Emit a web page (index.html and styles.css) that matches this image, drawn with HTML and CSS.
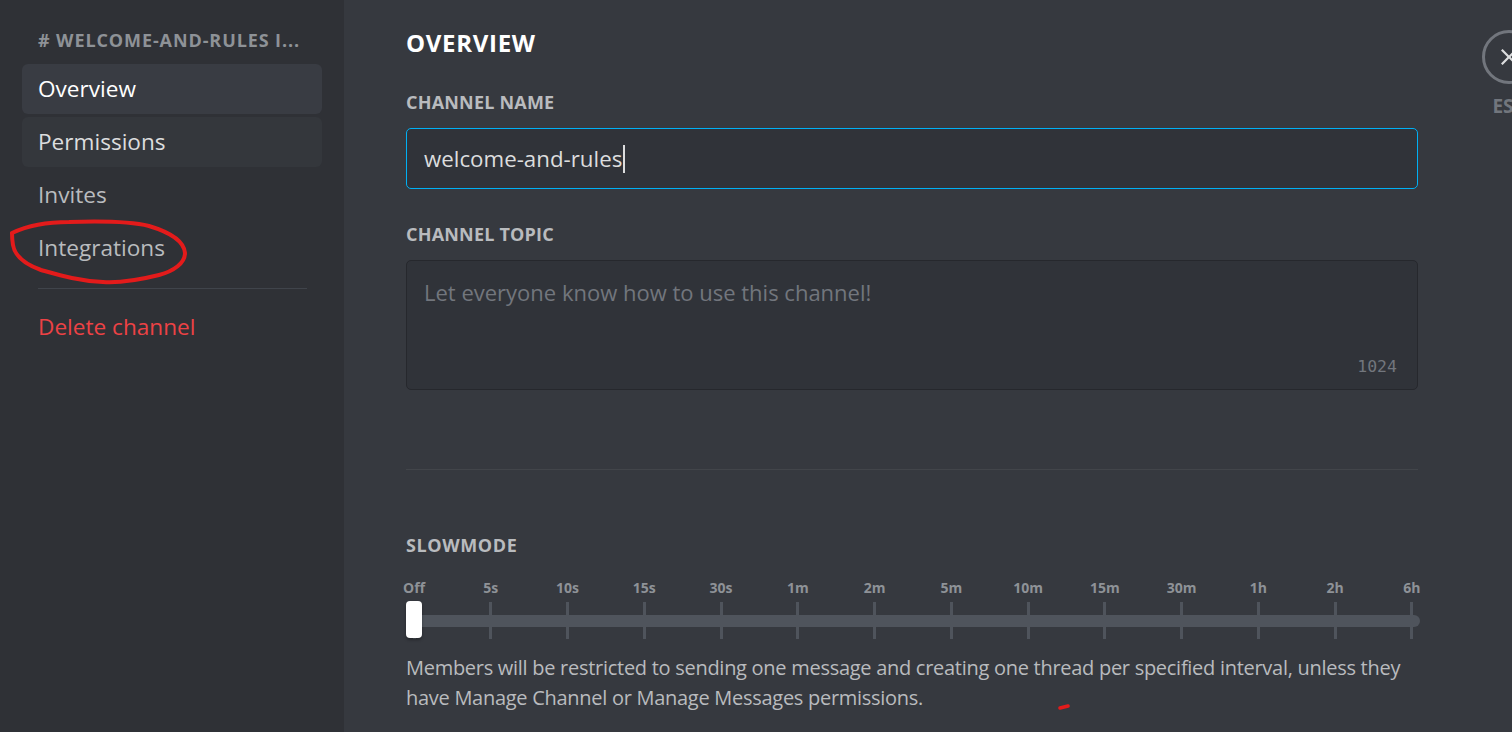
FILE: index.html
```html
<!DOCTYPE html>
<html lang="en">
<head>
<meta charset="utf-8">
<title>Channel Settings</title>
<link rel="stylesheet" href="styles.css">
</head>
<body>
<div class="app">
  <nav class="sidebar">
    <div class="side-inner">
      <div class="side-header"># WELCOME-AND-RULES I...</div>
      <div class="side-item selected">Overview</div>
      <div class="side-item hovered">Permissions</div>
      <div class="side-item">Invites</div>
      <div class="side-item">Integrations</div>
      <div class="side-sep"></div>
      <div class="side-item danger">Delete channel</div>
    </div>
    <svg class="scribble" width="200" height="80" viewBox="0 0 200 80" aria-hidden="true">
      <path d="M3 18 C 20 10, 40 7, 60 7 C 90 6, 120 6, 140 11 C 160 17, 175 26, 176 38 C 176 48, 165 56, 150 60 C 130 65, 110 68, 94 67 C 70 66, 50 60, 32 55 C 18 50, 6 42, 4 30 C 3 24, 3 20, 3 18" fill="none" stroke="#e31b1b" stroke-width="4" stroke-linecap="round"/>
    </svg>
  </nav>
  <main class="main">
    <section class="content">
      <h2 class="title">OVERVIEW</h2>
      <label class="label">CHANNEL NAME</label>
      <div class="input focused"><span>welcome-and-rules</span><span class="caret"></span></div>
      <label class="label">CHANNEL TOPIC</label>
      <div class="textarea">
        <span class="placeholder">Let everyone know how to use this channel!</span>
        <span class="counter">1024</span>
      </div>
      <div class="divider"></div>
      <label class="label slow">SLOWMODE</label>
      <div class="slider">
        <div class="track"></div>
        <div class="marks">
          <div class="mark"><span>Off</span><i></i></div>
          <div class="mark"><span>5s</span><i></i></div>
          <div class="mark"><span>10s</span><i></i></div>
          <div class="mark"><span>15s</span><i></i></div>
          <div class="mark"><span>30s</span><i></i></div>
          <div class="mark"><span>1m</span><i></i></div>
          <div class="mark"><span>2m</span><i></i></div>
          <div class="mark"><span>5m</span><i></i></div>
          <div class="mark"><span>10m</span><i></i></div>
          <div class="mark"><span>15m</span><i></i></div>
          <div class="mark"><span>30m</span><i></i></div>
          <div class="mark"><span>1h</span><i></i></div>
          <div class="mark"><span>2h</span><i></i></div>
          <div class="mark"><span>6h</span><i></i></div>
        </div>
        <div class="thumb"></div>
      </div>
      <p class="desc">Members will be restricted to sending one message and creating one thread per specified interval, unless they have Manage Channel or Manage Messages permissions.</p>
      <svg class="dash" width="14" height="8" viewBox="0 0 14 8" aria-hidden="true"><path d="M2 5 L10 3" stroke="#e31b1b" stroke-width="3.5" stroke-linecap="round"/></svg>
    </section>
    <aside class="tools">
      <div class="close">
        <svg width="24" height="24" viewBox="0 0 24 24"><path d="M18.4 4 L20 5.6 13.6 12 20 18.4 18.4 20 12 13.6 5.6 20 4 18.4 10.4 12 4 5.6 5.6 4 12 10.4Z" fill="#dcddde"/></svg>
      </div>
      <div class="esc">ESC</div>
    </aside>
  </main>
</div>
</body>
</html>
```
FILE: styles.css
```css
* { box-sizing: border-box; }
html, body { margin: 0; padding: 0; height: 100%; }
body {
  background: #36393f;
  font-family: "Open Sans", "Noto Sans", sans-serif;
  overflow: hidden;
}
.app { display: flex; height: 732px; }

.sidebar {
  position: relative;
  width: 344px;
  flex: 0 0 344px;
  background: #2f3136;
  padding-top: 28px;
}
.side-inner { margin-left: 22px; width: 300px; display: flex; flex-direction: column; gap: 3px; }
.side-header {
  padding: 0 16px;
  height: 24px;
  line-height: 24px;
  font-size: 18px;
  letter-spacing: 0.9px;
  font-weight: 700;
  color: #8e9297;
  white-space: nowrap;
  overflow: hidden;
  margin-bottom: 9px;
}
.side-item {
  height: 50px;
  line-height: 50px;
  padding: 0 16px;
  border-radius: 6px;
  font-size: 22.6px;
  color: #b9bbbe;
}
.side-item.selected { background: #393c43; color: #ffffff; }
.side-item.hovered { background: #34373c; color: #dcddde; }
.side-item.danger { color: #ed4245; }
.side-sep { height: 1px; background: #40444b; margin: 12px 15px 10px 16px; }

.scribble { position: absolute; left: 9px; top: 215px; }

.main { display: flex; flex: 1; padding-left: 62px; }
.content { position: relative; width: 1012px; flex: 0 0 1012px; padding-top: 28px; }
.title {
  margin: 0 0 32px;
  font-size: 24px;
  letter-spacing: 0.7px;
  line-height: 30px;
  font-weight: 700;
  color: #ffffff;
}
.label {
  display: block;
  font-size: 18px;
  letter-spacing: 0.2px;
  line-height: 24px;
  font-weight: 700;
  color: #b9bbbe;
  margin-bottom: 14px;
}
.input {
  height: 61px;
  border: 1px solid #00b0f4;
  border-radius: 5px;
  background: #303339;
  padding: 0 17px;
  display: flex;
  align-items: center;
  font-size: 22.3px;
  color: #dcddde;
  margin-bottom: 33px;
}
.caret { display: inline-block; width: 2px; height: 28px; background: #dcddde; margin-left: 1px; }
.textarea {
  position: relative;
  height: 130px;
  border: 1px solid #26282d;
  border-radius: 5px;
  background: #303339;
  padding: 16px 17px;
  font-size: 22px;
  line-height: 30px;
}
.placeholder { color: #72767d; }
.counter {
  position: absolute;
  right: 20px;
  bottom: 12px;
  font-family: "DejaVu Sans Mono", "Liberation Mono", monospace;
  font-size: 16.5px;
  line-height: 20px;
  color: #72767d;
}
.divider { height: 1px; background: #42454a; margin: 79px 0 63px; }
.label.slow { margin-bottom: 22px; letter-spacing: 0.6px; }

.slider { position: relative; height: 60px; }
.track {
  position: absolute;
  left: 0; right: -2px;
  top: 36px;
  height: 12px;
  border-radius: 6px;
  background: #4f545c;
}
.marks { position: relative; display: flex; justify-content: space-between; margin: 0 -14px 0 -12px; }
.mark { width: 40px; display: flex; flex-direction: column; align-items: center; }
.mark span { font-size: 14px; line-height: 18px; font-weight: 700; color: #8e9297; }
.mark i { display: block; width: 3px; height: 37px; margin-top: 5px; background: #4f545c; }
.thumb {
  position: absolute;
  left: 0; top: 22px;
  width: 16px; height: 37px;
  border-radius: 4px;
  background: #ffffff;
  box-shadow: 0 2px 3px rgba(0,0,0,0.3);
}
.desc {
  margin: 14px 0 0;
  font-size: 20px;
  letter-spacing: -0.28px;
  line-height: 30px;
  color: #b9bbbe;
}
.dash { position: absolute; left: 652px; top: 703px; }

.tools { margin-left: 64px; padding-top: 30px; width: 54px; flex: 0 0 54px; display: flex; flex-direction: column; align-items: center; }
.close {
  width: 54px; height: 54px;
  border: 3px solid #72767d;
  border-radius: 50%;
  display: flex; align-items: center; justify-content: center;
}
.esc { margin-top: 12px; font-size: 19px; font-weight: 700; color: #72767d; line-height: 20px; }
```
